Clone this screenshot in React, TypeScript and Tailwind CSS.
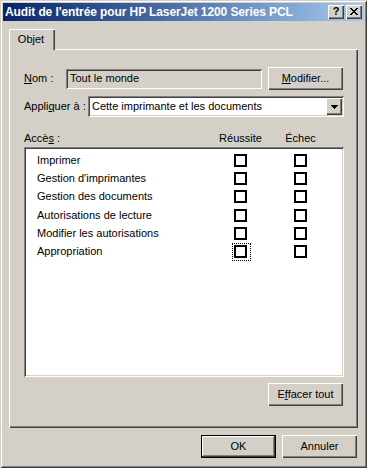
import React from "react";

const raised =
  "shadow-[inset_1px_1px_0_#ffffff,inset_-1px_-1px_0_#404040,inset_-2px_-2px_0_#808080]";
const sunken =
  "shadow-[inset_1px_1px_0_#808080,inset_-1px_-1px_0_#ffffff,inset_2px_2px_0_#404040,inset_-2px_-2px_0_#d4d0c8]";

function Btn({ children, def }: { children: React.ReactNode; def?: boolean }) {
  return (
    <div
      className={
        def
          ? "w-[75px] h-[23px] flex items-center justify-center bg-[#d4d0c8] shadow-[inset_0_0_0_1px_#000000,inset_-2px_-2px_0_#404040,inset_2px_2px_0_#ffffff,inset_-3px_-3px_0_#808080]"
          : "w-[75px] h-[23px] flex items-center justify-center bg-[#d4d0c8] " + raised
      }
    >
      <span className="leading-none">{children}</span>
    </div>
  );
}

function Check({ focus }: { focus?: boolean }) {
  return (
    <span className="relative inline-block w-[13px] h-[13px] border-2 border-black bg-white">
      {focus && (
        <span className="absolute -left-[4px] -top-[4px] w-[19px] h-[18px] border border-dotted border-black" />
      )}
    </span>
  );
}

const rows = [
  { label: "Imprimer", h: "h-[18px]" },
  { label: "Gestion d'imprimantes", h: "h-[18px]" },
  { label: "Gestion des documents", h: "h-[19px]" },
  { label: "Autorisations de lecture", h: "h-[18px]" },
  { label: "Modifier les autorisations", h: "h-[18px]" },
  { label: "Appropriation", h: "h-[19px]" },
];

export default function App() {
  return (
    <div className="w-[367px] h-[468px] bg-[#d4d0c8] p-[3px] flex flex-col text-black text-[11px] font-['Liberation_Sans',Arial,sans-serif] shadow-[inset_1px_1px_0_#d4d0c8,inset_-1px_-1px_0_#404040,inset_2px_2px_0_#ffffff,inset_-2px_-2px_0_#808080]">
      {/* Title bar */}
      <div className="h-[18px] flex items-center pl-[2px] pr-[2px] bg-linear-to-r from-[#0a246a] to-[#a6caf0]">
        <span className="text-white font-bold text-[12px] leading-none tracking-[-0.1px] flex-1 whitespace-nowrap">
          Audit de l'entrée pour HP LaserJet 1200 Series PCL
        </span>
        <div className={"w-[16px] h-[14px] bg-[#d4d0c8] flex items-center justify-center " + raised}>
          <span className="font-bold text-[11px] leading-none -mt-px">?</span>
        </div>
        <div className={"ml-[2px] w-[16px] h-[14px] bg-[#d4d0c8] flex items-center justify-center " + raised}>
          <svg width="8" height="7" viewBox="0 0 8 7" shapeRendering="crispEdges" className="-mt-px">
            <path
              d="M0 0h2v1H0zM6 0h2v1H6zM1 1h2v1H1zM5 1h2v1H5zM2 2h4v1H2zM3 3h2v1H3zM2 4h4v1H2zM1 5h2v1H1zM5 5h2v1H5zM0 6h2v1H0zM6 6h2v1H6z"
              fill="#000"
            />
          </svg>
        </div>
      </div>

      {/* Body */}
      <div className="mt-[8px] ml-[6px] w-[349px]">
        {/* Tab header */}
        <div className="h-[20px] flex">
          <div className="relative z-10 w-[46px] h-[21px] -mb-px bg-[#d4d0c8] border-l border-t border-white rounded-tl-[2px] shadow-[inset_-1px_0_0_#404040,inset_-2px_0_0_#808080] flex items-center justify-center pr-[3px]">
            <span className="leading-none -mt-[1px]">Objet</span>
          </div>
        </div>

        {/* Panel */}
        <div className="h-[379px] pl-[15px] pr-[14px] pt-[18px] flex flex-col shadow-[inset_1px_1px_0_#ffffff,inset_-1px_-1px_0_#404040,inset_-2px_-2px_0_#808080]">
          {/* Nom row */}
          <div className="h-[23px] flex items-center">
            <span className="w-[42px]">
              <u>N</u>om :
            </span>
            <div className={"w-[196px] h-[20px] bg-[#d4d0c8] flex items-center pl-[4px] " + sunken}>
              Tout le monde
            </div>
            <div className="ml-auto mr-[1px]">
              <Btn>
                <u>M</u>odifier...
              </Btn>
            </div>
          </div>

          {/* Appliquer row */}
          <div className="mt-[6px] h-[21px] flex items-center">
            <span className="w-[64px] whitespace-nowrap">
              Appli<u>q</u>uer à :
            </span>
            <div className={"flex-1 h-[21px] bg-white flex items-center " + sunken}>
              <span className="flex-1 pl-[4px]">Cette imprimante et les documents</span>
              <div className={"w-[16px] h-[17px] mr-[2px] bg-[#d4d0c8] flex items-center justify-center " + raised}>
                <svg width="7" height="4" viewBox="0 0 7 4" shapeRendering="crispEdges">
                  <path d="M0 0h7v1H0zM1 1h5v1H1zM2 2h3v1H2zM3 3h1v1H3z" fill="#000" />
                </svg>
              </div>
            </div>
          </div>

          {/* Header row */}
          <div className="mt-[13px] h-[17px] flex items-center">
            <span className="w-[187px]">
              Accè<u>s</u> :
            </span>
            <span className="w-[59px] text-center">Réussite</span>
            <span className="w-[61px] text-center">Échec</span>
          </div>

          {/* List */}
          <div className={"h-[230px] bg-white pt-[4px] " + sunken}>
            {rows.map((r, i) => (
              <div key={r.label} className={"flex items-center " + r.h}>
                <span className="w-[187px] pl-[13px] whitespace-nowrap">{r.label}</span>
                <span className="w-[59px] flex justify-center">
                  <Check focus={i === rows.length - 1} />
                </span>
                <span className="w-[61px] flex justify-center">
                  <Check />
                </span>
              </div>
            ))}
          </div>

          {/* Effacer tout */}
          <div className="mt-[6px] flex justify-end mr-[1px]">
            <Btn>
              E<u>f</u>facer tout
            </Btn>
          </div>
        </div>
      </div>

      {/* Bottom buttons */}
      <div className="mt-[7px] flex justify-end gap-[6px] pr-[7px]">
        <Btn def>OK</Btn>
        <Btn>Annuler</Btn>
      </div>
    </div>
  );
}
